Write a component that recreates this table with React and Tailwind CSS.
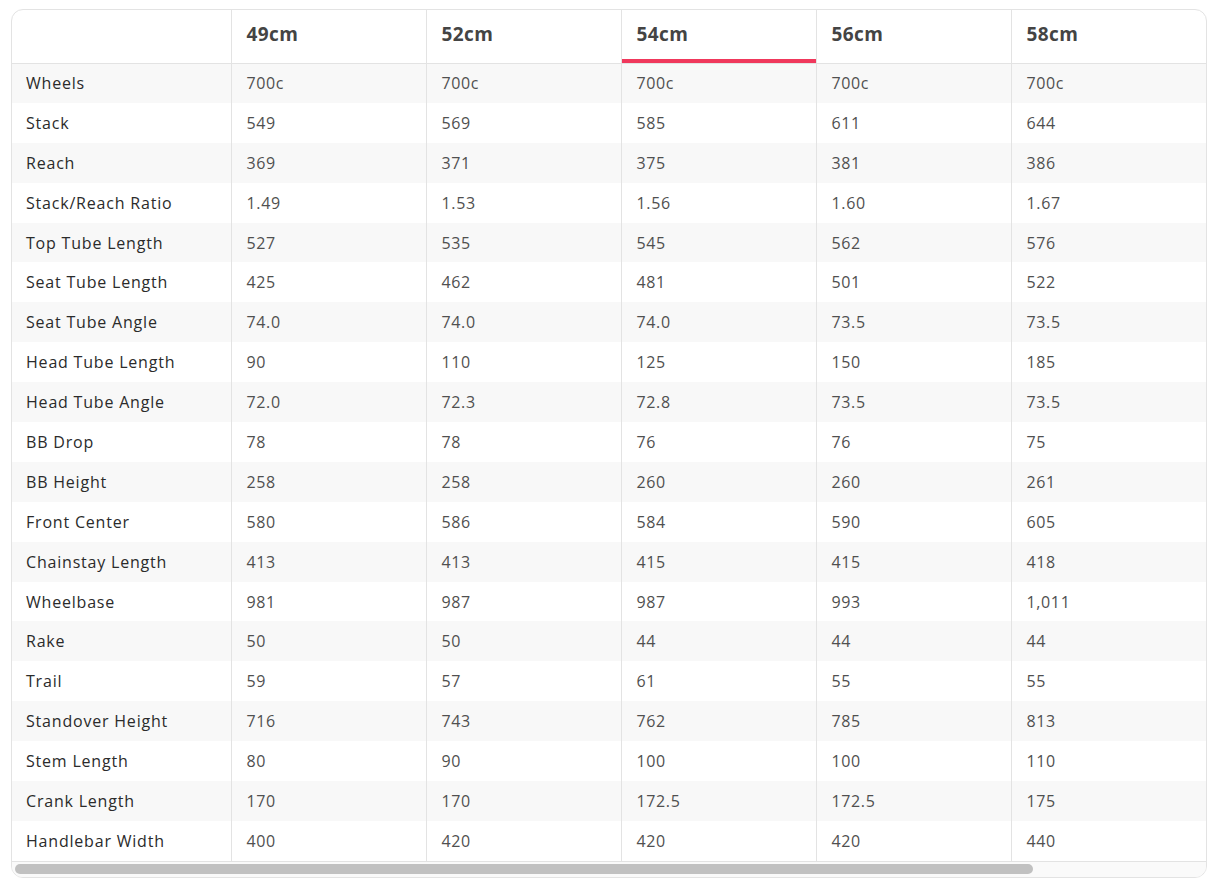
const sizes = ["49cm", "52cm", "54cm", "56cm", "58cm"]

const rows = [
  ["Wheels", "700c", "700c", "700c", "700c", "700c"],
  ["Stack", "549", "569", "585", "611", "644"],
  ["Reach", "369", "371", "375", "381", "386"],
  ["Stack/Reach Ratio", "1.49", "1.53", "1.56", "1.60", "1.67"],
  ["Top Tube Length", "527", "535", "545", "562", "576"],
  ["Seat Tube Length", "425", "462", "481", "501", "522"],
  ["Seat Tube Angle", "74.0", "74.0", "74.0", "73.5", "73.5"],
  ["Head Tube Length", "90", "110", "125", "150", "185"],
  ["Head Tube Angle", "72.0", "72.3", "72.8", "73.5", "73.5"],
  ["BB Drop", "78", "78", "76", "76", "75"],
  ["BB Height", "258", "258", "260", "260", "261"],
  ["Front Center", "580", "586", "584", "590", "605"],
  ["Chainstay Length", "413", "413", "415", "415", "418"],
  ["Wheelbase", "981", "987", "987", "993", "1,011"],
  ["Rake", "50", "50", "44", "44", "44"],
  ["Trail", "59", "57", "61", "55", "55"],
  ["Standover Height", "716", "743", "762", "785", "813"],
  ["Stem Length", "80", "90", "100", "100", "110"],
  ["Crank Length", "170", "170", "172.5", "172.5", "175"],
  ["Handlebar Width", "400", "420", "420", "420", "440"],
]

export default function App() {
  return (
    <div className="pl-[11px] pt-[9px] bg-white min-h-[890px]" style={{ fontFamily: "'Open Sans', sans-serif" }}>
      <div className="w-[1196px] border border-[#e3e3e3] rounded-[12px] overflow-hidden bg-white">
        <table className="table-fixed border-collapse w-full">
          <colgroup>
            <col className="w-[219px]" />
            <col className="w-[195px]" />
            <col className="w-[195px]" />
            <col className="w-[195px]" />
            <col className="w-[195px]" />
            <col />
          </colgroup>
          <thead>
            <tr className="h-[53px] border-b border-[#e3e3e3]">
              <th className="border-r border-[#e3e3e3]"></th>
              {sizes.map((s, i) => (
                <th
                  key={s}
                  className={
                    "relative text-left pl-[15px] pb-[5px] text-[19px] tracking-[0.02em] font-bold text-[#444] " +
                    (i < sizes.length - 1 ? "border-r border-[#e3e3e3]" : "")
                  }
                >
                  {s}
                  {s === "54cm" && (
                    <span className="absolute left-0 right-0 bottom-0 h-[4px] bg-[#f0385c]"></span>
                  )}
                </th>
              ))}
            </tr>
          </thead>
          <tbody>
            {rows.map((r, i) => (
              <tr key={r[0]} className={"h-[39.9px] " + (i % 2 === 0 ? "bg-[#f8f8f8]" : "bg-white")}>
                <td className="pl-[14px] text-[16px] tracking-[0.05em] text-[#2b2b2b] border-r border-[#e3e3e3]">
                  {r[0]}
                </td>
                {r.slice(1).map((v, j) => (
                  <td
                    key={j}
                    className={
                      "pl-[15px] text-[16px] tracking-[0.04em] text-[#505050] " +
                      (j < 4 ? "border-r border-[#e3e3e3]" : "")
                    }
                  >
                    {v}
                  </td>
                ))}
              </tr>
            ))}
          </tbody>
        </table>
        <div className="h-[16px] border-t border-[#e3e3e3] bg-[#fafafa] flex items-center px-[3px]">
          <div className="h-[10px] w-[1018px] rounded-full bg-[#c1c1c1]"></div>
        </div>
      </div>
    </div>
  )
}
